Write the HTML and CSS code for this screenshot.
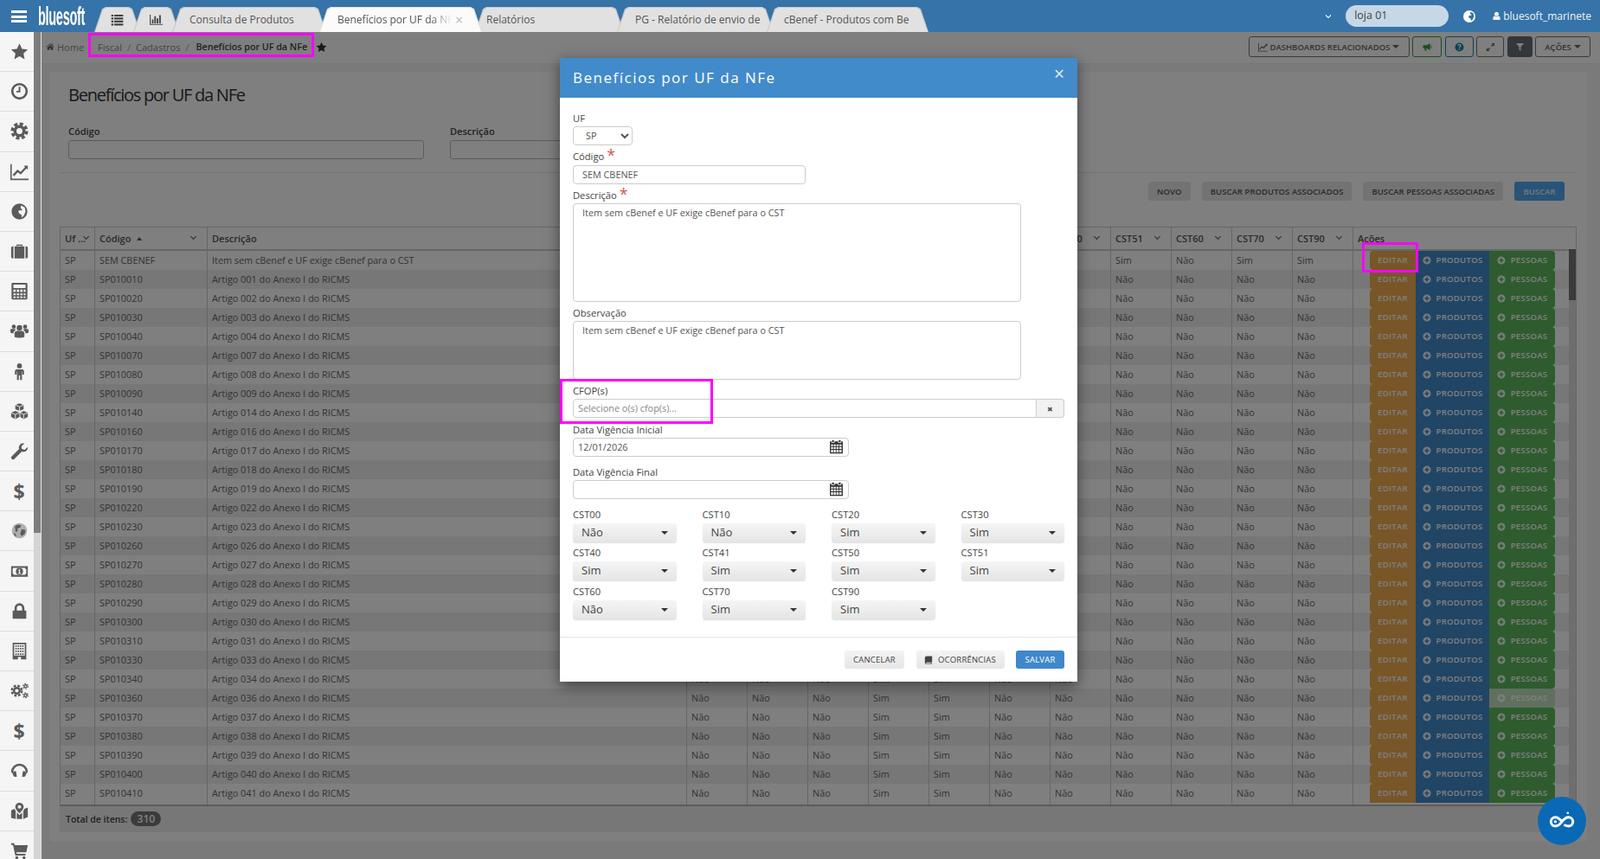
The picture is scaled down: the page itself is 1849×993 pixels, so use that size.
FILE: index.html
```html
<!DOCTYPE html>
<html lang="pt-BR">
<head>
    <meta charset="UTF-8">
    <title>Benefícios por UF da NFe</title>
    <link rel="stylesheet" href="styles.css">
</head>
<body>
    <svg class="sprite" xmlns="http://www.w3.org/2000/svg">
        <symbol id="i-star" viewBox="0 0 24 24"><path d="M12 1.500l3.300 7 7.700.9-5.700 5.200 1.500 7.600-6.800-3.800-6.800 3.800 1.500-7.600L1 9.400l7.700-.9z"/></symbol>
        <symbol id="i-clock" viewBox="0 0 24 24"><circle cx="12" cy="12" r="9.500" fill="none" stroke="currentColor" stroke-width="3"/><path d="M11 6h2.200v7.500H8v-2h3z"/></symbol>
        <symbol id="i-cog" viewBox="0 0 24 24"><circle cx="12" cy="12" r="6" fill="none" stroke="currentColor" stroke-width="4"/><circle cx="12" cy="12" r="9.500" fill="none" stroke="currentColor" stroke-width="4" stroke-dasharray="4.500 2.960"/></symbol>
        <symbol id="i-chart" viewBox="0 0 24 24"><path d="M0 2h1.800v19H24v2H0z"/><path d="M4 17l5.500-6 4 3L21 6" fill="none" stroke="currentColor" stroke-width="2.600"/><path d="M17.500 4H23v5.500z"/></symbol>
        <symbol id="i-globe" viewBox="0 0 24 24"><path fill-rule="evenodd" d="M12 1.500a10.500 10.500 0 1 0 0 21 10.500 10.500 0 0 0 0-21zM14 4l5 2.500 1 5.500-2 5-3 3-.5-4-3-1.500-1-3 2.500-1.500 2 1 .5-2-2-1.500z"/></symbol>
        <symbol id="i-briefcase" viewBox="0 0 24 24"><path d="M8 5V3h8v2h-1.500V4.500h-5V5z"/><path d="M1 7.500A2 2 0 0 1 3 5.500h1v16H3a2 2 0 0 1-2-2zM5.500 5.500h13v16h-13zM20 5.500h1a2 2 0 0 1 2 2v12a2 2 0 0 1-2 2h-1z"/></symbol>
        <symbol id="i-calc" viewBox="0 0 24 24"><path fill-rule="evenodd" d="M3 1h18a1.500 1.500 0 0 1 1.500 1.500v19A1.500 1.500 0 0 1 21 23H3a1.500 1.500 0 0 1-1.500-1.500v-19A1.500 1.500 0 0 1 3 1zM4 3.500V8h16V3.500zM4 10v3h3v-3zm4.500 0v3h3v-3zm4.500 0v3h3v-3zm4.500 0v3H20v-3zM4 15v2.500h3V15zm4.500 0v2.500h3V15zm4.500 0v2.500h3V15zm4.500 0v2.500H20V15zM4 19v2h3v-2zm4.500 0v2h3v-2zm4.500 0v2h3v-2zm4.500 0v2H20v-2z"/></symbol>
        <symbol id="i-users" viewBox="0 0 24 24"><circle cx="12" cy="8" r="3.700"/><circle cx="4.500" cy="6.500" r="2.700"/><circle cx="19.500" cy="6.500" r="2.700"/><path d="M5.500 20v-4.500c0-2 1.500-3.500 3.500-3.500h6c2 0 3.500 1.500 3.500 3.500V20c-3 1.500-10 1.500-13 0zM0 11c0-1 1-1.500 2-1.500h4.500c-.5.800 0 1.300.3 1.800-1.800.6-2.800 2-2.800 4-2 0-4-.5-4-1.500zM24 11c0-1-1-1.500-2-1.500h-4.500c.5.800 0 1.300-.3 1.800 1.800.6 2.800 2 2.800 4 2 0 4-.5 4-1.500z"/></symbol>
        <symbol id="i-male" viewBox="0 0 24 24"><circle cx="12" cy="4.500" r="3.300"/><path d="M8.500 9h7A2.500 2.500 0 0 1 18 11.500V16h-2.200v-4h-.5v11h-2.500v-6h-1.600v6H8.700V12h-.5v4H6v-4.500A2.500 2.500 0 0 1 8.500 9z"/></symbol>
        <symbol id="i-cubes" viewBox="0 0 24 24"><path d="M12 1.500l5.500 2.200v5.500L12 11.500 6.500 9.200V3.700zM6.500 11.500L12 13.800v5.700l-5.500 2.800L1 19.500v-5.700zM17.500 11.500l5.500 2.300v5.700l-5.500 2.800-4.400-2.800v-5.700z"/><path d="M6.500 3.700L12 6l5.500-2.300M12 6v5.500M1 13.800l5.500 2.400 5.500-2.400M6.500 16.200v6M13 13.800l4.500 2.400 5.500-2.400M17.500 16.200v6" fill="none" stroke="#f5f5f5" stroke-width="1"/></symbol>
        <symbol id="i-wrench" viewBox="0 0 24 24"><path d="M23 6.500l-4.200 3.700-3.500-1-.8-3.500L18.500 2c-3.500-1.200-7 1-7.300 4.800 0 1 .1 1.700.4 2.400L1.500 19a2.500 2.500 0 0 0 3.500 3.500l10-10c3.800 1.300 8.500-1.400 8-6z"/></symbol>
        <symbol id="i-earth" viewBox="0 0 24 24"><circle cx="12" cy="12" r="10" opacity=".45"/><path d="M6 6c3-2 6-2 8-1l-1 3-4 1 1 3-3 2zM15 10l5 1-1 5-4 3-2-3zM4 15l3 1 1 4c-2-1-3-3-4-5z"/></symbol>
        <symbol id="i-money" viewBox="0 0 24 24"><path fill-rule="evenodd" d="M1 5h22v14H1zM3.500 7.500c0 1-.5 1.500-.5 1.500v6c1 0 1.500.5 1.500 1.500h15c0-1 .5-1.500 1.500-1.500V9c-1 0-1.500-.5-1.500-1.500z"/><circle cx="12" cy="12" r="4.700"/><path d="M11.300 9.500h1.400v4.500h1v1h-3.400v-1h1v-3h-1z" fill="#f5f5f5"/></symbol>
        <symbol id="i-lock" viewBox="0 0 24 24"><path fill-rule="evenodd" d="M5.500 11V8a6.500 6.500 0 0 1 13 0v3H20a1 1 0 0 1 1 1v9a1 1 0 0 1-1 1H4a1 1 0 0 1-1-1v-9a1 1 0 0 1 1-1zm3 0h7V8a3.500 3.500 0 0 0-7 0z"/></symbol>
        <symbol id="i-building" viewBox="0 0 24 24"><path fill-rule="evenodd" d="M3 1h18v22h-7v-3h-4v3H3zM5 3v15h14V3z"/><path d="M6.500 4.500h2v2h-2zM9.500 4.500h2v2h-2zM12.500 4.500h2v2h-2zM15.500 4.500h2v2h-2zM6.500 8h2v2h-2zM9.500 8h2v2h-2zM12.500 8h2v2h-2zM15.500 8h2v2h-2zM6.500 11.500h2v2h-2zM9.500 11.500h2v2h-2zM12.500 11.500h2v2h-2zM15.500 11.500h2v2h-2zM6.500 15h2v2h-2zM9.500 15h2v2h-2zM12.500 15h2v2h-2zM15.500 15h2v2h-2z"/></symbol>
        <symbol id="i-cogs" viewBox="0 0 24 24"><g fill="none" stroke="currentColor"><circle cx="8.500" cy="12" r="3.800" stroke-width="2.800"/><circle cx="8.500" cy="12" r="6.600" stroke-width="2.800" stroke-dasharray="3.200 2"/><circle cx="20" cy="6" r="1.800" stroke-width="1.600"/><circle cx="20" cy="6" r="3.300" stroke-width="1.400" stroke-dasharray="1.800 1.650"/><circle cx="20" cy="18" r="1.800" stroke-width="1.600"/><circle cx="20" cy="18" r="3.300" stroke-width="1.400" stroke-dasharray="1.800 1.650"/></g></symbol>
        <symbol id="i-headset" viewBox="0 0 24 24"><path d="M1 14a11 11 0 0 1 22 0l-2.500 3-.5-3a8 8 0 0 0-16 0l-.5 3z"/><path d="M5 13h2.500l1 7.500H6.500C4 20.500 3 18 3.500 15zM19 13h-2.500l-1 7.500h2c2.500 0 3.500-2.500 3-5.500z"/></symbol>
        <symbol id="i-map" viewBox="0 0 24 24"><path fill-rule="evenodd" d="M12 1a5.500 5.500 0 0 1 5.500 5.500C17.500 10 12 15 12 15S6.500 10 6.500 6.500A5.500 5.500 0 0 1 12 1zm0 3.200a2.300 2.300 0 1 0 0 4.600 2.300 2.300 0 0 0 0-4.600z"/><path d="M1 11l4.500-2 1.500 3v10.500L1 21zM8.500 14l3.500 3.500 3.500-3.500v8.500l-7 0zM17 12l1.500-3L23 7.500V20l-6 2.500z"/></symbol>
        <symbol id="i-cart" viewBox="0 0 24 24"><path d="M1 2h4l.7 2.500H23l-2 9.500H8l.4 2H20v2.200H6.500L3.500 4.200H1z"/><circle cx="8.500" cy="21" r="2"/><circle cx="18" cy="21" r="2"/></symbol>
        <symbol id="i-home" viewBox="0 0 24 24"><path d="M12 3L1 12.500l1.200 1.300L12 5.500l9.800 8.300 1.200-1.300-4-3.400V4h-3v2.500z"/><path d="M4 14.500L12 7.500l8 7V21h-6v-5h-4v5H4z"/></symbol>
        <symbol id="i-list" viewBox="0 0 24 24"><path d="M1 3h4v3.500H1zM6.500 3H23v3.500H6.500zM1 8.500h4V12H1zM6.500 8.500H23V12H6.500zM1 14h4v3.500H1zM6.500 14H23v3.500H6.500zM1 19.500h4V23H1zM6.500 19.500H23V23H6.500z"/></symbol>
        <symbol id="i-bars" viewBox="0 0 24 24"><path d="M0 3h1.800v17.500H24V22H0zM4 12h3v7H4zM8.500 6h3v13h-3zM13 10h3v9h-3zM17.500 4h3v15h-3z"/></symbol>
        <symbol id="i-user" viewBox="0 0 24 24"><circle cx="12" cy="7" r="5.500"/><path d="M3 22v-5c0-3 2-5 4.500-5 1 1 2.800 1.600 4.500 1.600s3.500-.6 4.500-1.600c2.500 0 4.500 2 4.500 5v5z"/></symbol>
        <symbol id="i-bullhorn" viewBox="0 0 24 24"><path d="M19 3v16h-1.500L11 15H9l1 6.500H6L5 15H3.500A2.500 2.500 0 0 1 1 12.500v-3A2.500 2.500 0 0 1 3.500 7H11l6.500-4zM21 8.500l2-1.500v8l-2-1.500z"/></symbol>
        <symbol id="i-help" viewBox="0 0 24 24"><path fill-rule="evenodd" d="M12 1a11 11 0 1 0 0 22 11 11 0 0 0 0-22zm-1.500 15h3v3h-3zm-3-9c1-2 3-2.500 4.700-2.500 2.800 0 4.800 1.500 4.800 3.800 0 3-3.500 3-3.500 5.700h-3c0-3.500 3.200-3.800 3.200-5.400 0-.8-.7-1.300-1.700-1.300-1.200 0-1.900.7-2.500 1.500z"/></symbol>
        <symbol id="i-expand" viewBox="0 0 24 24"><path d="M14 2h8v8l-3-3-4 4-2-2 4-4zM10 22H2v-8l3 3 4-4 2 2-4 4z"/></symbol>
        <symbol id="i-filter" viewBox="0 0 24 24"><path d="M2 2h20l-8 9.500V22l-4-3v-7.500z"/></symbol>
        <symbol id="i-plus" viewBox="0 0 24 24"><path fill-rule="evenodd" d="M12 1a11 11 0 1 0 0 22 11 11 0 0 0 0-22zm-2 5h4v4h4v4h-4v4h-4v-4H6v-4h4z"/></symbol>
        <symbol id="i-book" viewBox="0 0 24 24"><path d="M7 1h15v16l-1.500 1.500V21H22v2H6a4 4 0 0 1-4-4V6a5 5 0 0 1 5-5zM6 18.500a1.500 1.500 0 0 0 0 2.500h12.500v-2.500z"/></symbol>
        <symbol id="i-calendar" viewBox="0 0 24 24"><path fill-rule="evenodd" d="M5 1h3v3.500H5zM16 1h3v3.500h-3zM1.500 3H4v2.500h5V3h6v2.500h5V3h2.500v20h-21zM3.500 8v3h3V8zm4.300 0v3h3.200V8zm4.500 0v3h3.300V8zm4.600 0v3h3.600V8zM3.500 12.200v3.300h3v-3.300zm4.300 0v3.300h3.200v-3.300zm4.500 0v3.300h3.300v-3.300zm4.600 0v3.300h3.600v-3.300zM3.500 16.800V21h3v-4.200zm4.300 0V21h3.200v-4.200zm4.500 0V21h3.300v-4.200zm4.600 0V21h3.600v-4.200z"/></symbol>
    </svg>

    <header class="topbar">
        <button class="burger"><span></span><span></span><span></span></button>
        <div class="logo"><span>bluesoft</span></div>
        <nav class="tabs">
            <a class="tab tab-icon"><svg class="ic"><use href="#i-list"/></svg></a>
            <a class="tab tab-icon"><svg class="ic"><use href="#i-bars"/></svg></a>
            <a class="tab"><span class="tab-label">Consulta de Produtos</span></a>
            <a class="tab active"><span class="tab-label">Benefícios por UF da NFe</span><span class="tab-close">&times;</span></a>
            <a class="tab"><span class="tab-label">Relatórios</span></a>
            <a class="tab"><span class="tab-label">PG - Relatório de envio de arquivos</span></a>
            <a class="tab"><span class="tab-label">cBenef - Produtos com Benefício</span></a>
        </nav>
        <div class="top-right">
            <span class="double-chevron"></span>
            <div class="store">loja 01</div>
            <svg class="ic top-globe"><use href="#i-globe"/></svg>
            <div class="user"><svg class="ic"><use href="#i-user"/></svg>bluesoft_marinete</div>
        </div>
    </header>

    <div class="shell">
        <aside class="sidebar">
            <a class="side-item"><svg class="ic"><use href="#i-star"/></svg></a>
            <a class="side-item"><svg class="ic"><use href="#i-clock"/></svg></a>
            <a class="side-item"><svg class="ic"><use href="#i-cog"/></svg></a>
            <a class="side-item"><svg class="ic"><use href="#i-chart"/></svg></a>
            <a class="side-item"><svg class="ic"><use href="#i-globe"/></svg></a>
            <a class="side-item"><svg class="ic"><use href="#i-briefcase"/></svg></a>
            <a class="side-item"><svg class="ic"><use href="#i-calc"/></svg></a>
            <a class="side-item"><svg class="ic"><use href="#i-users"/></svg></a>
            <a class="side-item"><svg class="ic"><use href="#i-male"/></svg></a>
            <a class="side-item"><svg class="ic"><use href="#i-cubes"/></svg></a>
            <a class="side-item"><svg class="ic"><use href="#i-wrench"/></svg></a>
            <a class="side-item side-dollar">$</a>
            <a class="side-item"><svg class="ic"><use href="#i-earth"/></svg></a>
            <a class="side-item"><svg class="ic"><use href="#i-money"/></svg></a>
            <a class="side-item"><svg class="ic"><use href="#i-lock"/></svg></a>
            <a class="side-item"><svg class="ic"><use href="#i-building"/></svg></a>
            <a class="side-item"><svg class="ic"><use href="#i-cogs"/></svg></a>
            <a class="side-item side-dollar">$</a>
            <a class="side-item"><svg class="ic"><use href="#i-headset"/></svg></a>
            <a class="side-item"><svg class="ic"><use href="#i-map"/></svg></a>
            <a class="side-item"><svg class="ic"><use href="#i-cart"/></svg></a>
        </aside>
        <div class="side-scroll"><div class="side-thumb"></div></div>

        <main class="main">
            <div class="crumbbar">
                <svg class="ic crumb-home"><use href="#i-home"/></svg>
                <a class="crumb crumb-first">Home</a>
                <a class="crumb crumb-fiscal">Fiscal</a>
                <span class="crumb-sep">/</span>
                <a class="crumb">Cadastros</a>
                <span class="crumb-sep">/</span>
                <strong class="crumb-current">Benefícios por UF da NFe</strong>
                <svg class="ic crumb-star"><use href="#i-star"/></svg>
                <div class="toolbar">
                    <button class="tool tool-dash"><svg class="ic"><use href="#i-chart"/></svg>Dashboards relacionados<i class="caret"></i></button>
                    <button class="tool tool-green"><svg class="ic"><use href="#i-bullhorn"/></svg></button>
                    <button class="tool tool-info"><svg class="ic"><use href="#i-help"/></svg></button>
                    <button class="tool tool-expand"><svg class="ic"><use href="#i-expand"/></svg></button>
                    <button class="tool tool-filter"><svg class="ic"><use href="#i-filter"/></svg></button>
                    <button class="tool tool-acoes">Ações<i class="caret"></i></button>
                </div>
            </div>

            <section class="panel">
                <h1 class="page-title">Benefícios por UF da NFe</h1>
                <div class="filters">
                    <div class="filter filter-code">
                        <label>Código</label>
                        <input type="text">
                    </div>
                    <div class="filter filter-desc">
                        <label>Descrição</label>
                        <input type="text">
                    </div>
                </div>
                <div class="actions">
                    <button class="btn btn-new">Novo</button>
                    <button class="btn">Buscar produtos associados</button>
                    <button class="btn">Buscar pessoas associadas</button>
                    <button class="btn btn-search">Buscar</button>
                </div>

                <div class="grid">
                    <table class="grid-table">
                        <colgroup>
                            <col class="col-uf"><col class="col-code"><col class="col-desc">
                            <col class="col-cst"><col class="col-cst"><col class="col-cst"><col class="col-cst">
                            <col class="col-cst"><col class="col-cst"><col class="col-cst"><col class="col-cst">
                            <col class="col-cst"><col class="col-cst"><col class="col-cst">
                            <col>
                        </colgroup>
                        <thead>
                            <tr>
                                <th class="has-menu">Uf ...</th>
                                <th class="has-menu">Código <i class="sort-up"></i></th>
                                <th>Descrição</th>
                                <th class="has-menu">CST00</th>
                                <th class="has-menu">CST10</th>
                                <th class="has-menu">CST20</th>
                                <th class="has-menu">CST30</th>
                                <th class="has-menu">CST40</th>
                                <th class="has-menu">CST41</th>
                                <th class="has-menu">CST50</th>
                                <th class="has-menu">CST51</th>
                                <th class="has-menu">CST60</th>
                                <th class="has-menu">CST70</th>
                                <th class="has-menu">CST90</th>
                                <th>Ações</th>
                            </tr>
                        </thead>
                        <tbody id="rows"></tbody>
                    </table>
                    <div class="grid-scroll"><div class="grid-thumb"></div></div>
                    <div class="grid-foot"><b>Total de itens:</b> <span class="badge">310</span></div>
                </div>
            </section>

            <div class="backdrop"></div>

            <div class="modal">
                <div class="modal-head">
                    <h2>Benefícios por UF da NFe</h2>
                    <span class="modal-close">&times;</span>
                </div>
                <form class="modal-body">
                    <div class="field">
                        <label>UF</label>
                        <select class="ctl uf-select"><option>SP</option></select>
                    </div>
                    <div class="field field-code">
                        <label>Código <em class="req">*</em></label>
                        <input class="ctl code-input" type="text" value="SEM CBENEF">
                    </div>
                    <div class="field">
                        <label>Descrição <em class="req">*</em></label>
                        <textarea class="ctl area area-desc">Item sem cBenef e UF exige cBenef para o CST</textarea>
                    </div>
                    <div class="field">
                        <label>Observação</label>
                        <textarea class="ctl area area-obs">Item sem cBenef e UF exige cBenef para o CST</textarea>
                    </div>
                    <div class="field">
                        <label>CFOP(s)</label>
                        <div class="input-group">
                            <input class="ctl cfop-input" type="text" placeholder="Selecione o(s) cfop(s)...">
                            <span class="addon">&#10006;</span>
                        </div>
                    </div>
                    <div class="field field-date">
                        <label>Data Vigência Inicial</label>
                        <div class="date-wrap">
                            <input class="ctl date-input" type="text" value="12/01/2026">
                            <svg class="ic date-icon"><use href="#i-calendar"/></svg>
                        </div>
                    </div>
                    <div class="field field-date">
                        <label>Data Vigência Final</label>
                        <div class="date-wrap">
                            <input class="ctl date-input" type="text">
                            <svg class="ic date-icon"><use href="#i-calendar"/></svg>
                        </div>
                    </div>
                    <div class="cst-grid">
                        <div><label>CST00</label><button type="button" class="pick">Não</button></div>
                        <div><label>CST10</label><button type="button" class="pick">Não</button></div>
                        <div><label>CST20</label><button type="button" class="pick">Sim</button></div>
                        <div><label>CST30</label><button type="button" class="pick">Sim</button></div>
                        <div><label>CST40</label><button type="button" class="pick">Sim</button></div>
                        <div><label>CST41</label><button type="button" class="pick">Sim</button></div>
                        <div><label>CST50</label><button type="button" class="pick">Sim</button></div>
                        <div><label>CST51</label><button type="button" class="pick">Sim</button></div>
                        <div class="cst-last"><label>CST60</label><button type="button" class="pick">Não</button></div>
                        <div class="cst-last"><label>CST70</label><button type="button" class="pick">Sim</button></div>
                        <div class="cst-last"><label>CST90</label><button type="button" class="pick">Sim</button></div>
                    </div>
                </form>
                <div class="modal-foot">
                    <button class="mbtn mbtn-cancel">Cancelar</button>
                    <button class="mbtn mbtn-occ"><svg class="ic"><use href="#i-book"/></svg>Ocorrências</button>
                    <button class="mbtn mbtn-save">Salvar</button>
                </div>
            </div>
        </main>
    </div>

    <div class="mark mark-crumb"></div>
    <div class="mark mark-edit"></div>
    <div class="mark mark-cfop"></div>

    <button class="fab">
        <svg viewBox="0 0 40 40" width="34" height="34" fill="none" stroke="#fff" stroke-width="3.500">
            <path d="M20 21c-3-4-5-6-9-6a6 6 0 0 0 0 12c4 0 6-2 9-6s5-6 9-6a6 6 0 0 1 0 12c-3 0-5-1-6-2"/>
            <circle cx="11" cy="21" r="2" fill="#fff" stroke="none"/>
            <circle cx="28" cy="9" r="1.500" fill="#fff" stroke="none"/>
        </svg>
    </button>

    <script src="app.js"></script>
</body>
</html>
```

FILE: styles.css
```css
* {
    margin: 0;
    padding: 0;
    box-sizing: border-box;
}
body {
    font-family: "Open Sans", "Liberation Sans", sans-serif;
    font-size: 11px;
    color: #555;
    height: 100vh;
    overflow: hidden;
    background: #f4f4f4;
}
.sprite {
    display: none;
}
.ic {
    width: 1em;
    height: 1em;
    fill: currentColor;
    flex: none;
}
button {
    font-family: inherit;
    border: none;
    cursor: pointer;
}

/* top bar */
.topbar {
    height: 37px;
    background: #3673a8;
    display: flex;
    align-items: flex-end;
    position: relative;
    z-index: 5;
}
.burger {
    width: 18px;
    height: 14px;
    margin: 0 0 11px 13px;
    background: none;
    display: flex;
    flex-direction: column;
    justify-content: space-between;
}
.burger span {
    display: block;
    height: 3px;
    background: #fff;
}
.logo {
    width: 54px;
    margin: 0 11px 3px 13px;
    height: 30px;
    color: #fff;
}
.logo span {
    display: inline-block;
    font-family: "Liberation Sans", sans-serif;
    font-weight: bold;
    font-size: 30px;
    line-height: 30px;
    letter-spacing: -.5px;
    transform: scaleX(.48);
    transform-origin: left center;
}
.tabs {
    display: flex;
    height: 29px;
}
.tab {
    position: relative;
    height: 29px;
    margin-left: -8px;
    padding-left: 20px;
    display: flex;
    align-items: center;
    font-size: 12px;
    color: #555;
    background: #c9c9c9;
    clip-path: polygon(0 100%, 9px 8%, 13px 0, calc(100% - 13px) 0, calc(100% - 9px) 8%, 100% 100%);
}
.tab::before {
    content: "";
    position: absolute;
    inset: 1px 1px 0 1px;
    background: #e1e1e1;
    clip-path: polygon(0 100%, 9px 8%, 13px 0, calc(100% - 13px) 0, calc(100% - 9px) 8%, 100% 100%);
}
.tab > * {
    position: relative;
}
.tab:first-child {
    margin-left: 0;
}
.tab-icon {
    width: 53px;
    padding: 0;
    justify-content: center;
    color: #444;
    font-size: 15px;
}
.tab:nth-child(3) { width: 178px; }
.tab:nth-child(4) { width: 188px; z-index: 2; padding-left: 21px; }
.tab:nth-child(5) { width: 172px; padding-left: 13px; }
.tab:nth-child(6) { width: 181px; padding-left: 21px; }
.tab:nth-child(7) { width: 187px; }
.tab-label {
    white-space: nowrap;
    overflow: hidden;
}
.tab:nth-child(6) .tab-label { width: 144px; }
.tab:nth-child(7) .tab-label { width: 145px; }
.tab.active {
    background: #e4e4e4;
}
.tab.active::before {
    background: #fbfbfb;
}
.active .tab-label {
    width: 132px;
    -webkit-mask-image: linear-gradient(to right, #000 82%, transparent 100%);
    mask-image: linear-gradient(to right, #000 82%, transparent 100%);
}
.tab-close {
    margin-left: 4px;
    font-size: 16px;
    color: #bbb;
}
.top-right {
    margin-left: auto;
    height: 37px;
    padding-right: 10px;
    display: flex;
    align-items: center;
    color: #fff;
}
.double-chevron {
    width: 6px;
    height: 8px;
    margin: 0 17px 0 0;
    background: linear-gradient(45deg, transparent 40%, #d5e2ee 40%, #d5e2ee 60%, transparent 60%) left / 50% 100% no-repeat,
                linear-gradient(-45deg, transparent 40%, #d5e2ee 40%, #d5e2ee 60%, transparent 60%) right / 50% 100% no-repeat;
}
.store {
    width: 119px;
    height: 25px;
    margin-top: -1px;
    padding-left: 10px;
    border-radius: 13px;
    background: #c6d7e6;
    color: #444;
    font-size: 12.500px;
    line-height: 24px;
}
.top-globe {
    font-size: 16px;
    margin-left: 16px;
}
.user {
    margin-left: 20px;
    display: flex;
    align-items: center;
    gap: 2px;
    font-size: 12px;
    color: #eef3f8;
}
.user .ic {
    font-size: 11px;
    margin-left: -2px;
}

/* page frame */
.shell {
    display: flex;
    height: calc(100vh - 37px);
}
.sidebar {
    width: 39px;
    flex: none;
    background: #f5f5f5;
    overflow: hidden;
    position: relative;
    z-index: 5;
}
.side-item {
    height: 46.2px;
    padding-left: 5px;
    border-bottom: 1px solid #dcdcdc;
    display: flex;
    align-items: center;
    justify-content: center;
    font-size: 21px;
    color: #5b5b5b;
}
.side-dollar {
    font-weight: 700;
    font-size: 23px;
}
.side-scroll {
    width: 9px;
    flex: none;
    background: #d4d4d4;
    border-right: 1px solid #e2e2e2;
    position: relative;
    z-index: 5;
}
.side-thumb {
    height: 579px;
    background: #7e7e7e;
}
.main {
    flex: 1;
    position: relative;
    overflow: hidden;
}
.backdrop {
    position: absolute;
    inset: 0;
    background: rgba(0, 0, 0, .5);
}

/* breadcrumb */
.crumbbar {
    height: 37px;
    background: #fff;
    border-bottom: 1px solid #eee;
    padding: 5px 11px 7px 5px;
    display: flex;
    align-items: center;
    font-size: 11px;
    color: #888;
}
.crumb-home {
    font-size: 10px;
    color: #666;
    margin-right: 3px;
}
.crumb-fiscal {
    margin-left: 16px;
}
.crumb-sep {
    margin: 0 6px;
    color: #aaa;
}
.crumb-current {
    font-size: 10.700px;
    font-weight: 600;
    color: #444;
    margin-left: 2px;
}
.crumb-star {
    font-size: 13px;
    color: #333;
    margin-left: 10px;
}
.toolbar {
    margin-left: auto;
    display: flex;
    gap: 3.500px;
    height: 24px;
}
.tool {
    height: 24px;
    background: #fff;
    border: 1px solid #777;
    border-radius: 3px;
    font-size: 9.500px;
    font-weight: 600;
    text-transform: uppercase;
    color: #666;
    display: flex;
    align-items: center;
    justify-content: center;
    gap: 3px;
    white-space: nowrap;
}
.tool .ic {
    font-size: 11px;
}
.tool-dash { width: 186px; }
.tool-green { width: 34px; color: #3c9a3c; border-color: #3c9a3c; }
.tool-info { width: 33px; color: #1d86ab; border-color: #1d86ab; }
.tool-expand { width: 32px; }
.tool-filter { width: 29px; background: #666e78; border-color: #666e78; color: #fff; }
.tool-acoes { width: 64px; }
.caret {
    display: inline-block;
    border: 4px solid transparent;
    border-top-color: currentColor;
    border-bottom: none;
}

/* filter panel */
.panel {
    margin: 9px 15px 0 9px;
    height: 890px;
    padding: 15px 12px 11px;
    background: #fff;
    border-radius: 4px;
}
.page-title {
    height: 24px;
    margin: 0 0 22px 10px;
    font-size: 20px;
    line-height: 24px;
    font-weight: 400;
    letter-spacing: -1.250px;
    color: #333;
}
.filters {
    display: flex;
    gap: 30px;
    padding-left: 10px;
    padding-bottom: 15px;
    border-bottom: 1px solid #e6e6e6;
}
.filter label {
    display: block;
    height: 16px;
    margin-bottom: 2px;
    font-size: 11px;
    line-height: 16px;
    font-weight: 600;
    color: #444;
}
.filter input {
    display: block;
    height: 22px;
    border: 1px solid #bbb;
    border-radius: 3px;
    background: #fff;
}
.filter-code input { width: 411px; }
.filter-desc input { width: 410px; }
.actions {
    display: flex;
    justify-content: flex-end;
    gap: 13px;
    margin: 10px 14px 30px 0;
}
.btn {
    height: 22px;
    padding: 0 10px;
    border-radius: 3px;
    background: #e7e7e7;
    color: #555;
    font-size: 9.500px;
    font-weight: 600;
    letter-spacing: .05px;
    text-transform: uppercase;
}
.btn-new {
    width: 49px;
    padding: 0;
}
.btn-search {
    width: 58px;
    padding: 0;
    background: #4fa8f0;
    color: #eee;
}

/* grid */
.grid {
    position: relative;
}
.grid-table {
    width: 100%;
    table-layout: fixed;
    border-collapse: collapse;
    border: 1px solid #ccc;
    border-bottom: 2px solid #bbb;
}
.col-uf { width: 40px; }
.col-code { width: 130px; }
.col-desc { width: 554px; }
.col-cst { width: 70px; }
.grid-table th {
    height: 26px;
    padding: 0 5px;
    background: #fff;
    border-left: 1px solid #ccc;
    border-bottom: 2px solid #ccc;
    text-align: left;
    font-size: 11px;
    font-weight: 600;
    color: #555;
    white-space: nowrap;
    position: relative;
}
.has-menu::after {
    content: "";
    position: absolute;
    right: 13px;
    top: 8px;
    width: 4px;
    height: 4px;
    border-right: 1px solid #555;
    border-bottom: 1px solid #555;
    transform: rotate(45deg);
}
th:first-child.has-menu::after {
    right: 7px;
}
.sort-up {
    display: inline-block;
    margin: 0 0 2px 4px;
    border: 3px solid transparent;
    border-bottom: 4px solid #555;
    border-top: none;
}
.grid-table td {
    height: 22px;
    padding: 0 5px;
    border-left: 1px solid #ccc;
    font-size: 10.850px;
    color: #666;
    white-space: nowrap;
    overflow: hidden;
}
.grid-table tr:nth-child(even) td {
    background: #eee;
}
.grid-table tbody tr:last-child td {
    height: 25px;
    vertical-align: top;
    padding-top: 3px;
}
.cell-actions {
    padding: 0 0 0 19px !important;
}
.row-btns {
    display: flex;
    height: 22px;
}
.row-btn {
    height: 22px;
    color: #fff;
    font-size: 9.500px;
    font-weight: 600;
    letter-spacing: .3px;
    text-transform: uppercase;
    display: flex;
    align-items: center;
    justify-content: center;
    gap: 6px;
}
.row-btn .ic {
    font-size: 10px;
    opacity: .9;
}
.row-edit { width: 53px; background: #f0ad4e; border-radius: 4px 0 0 4px; }
.row-prod { width: 85px; background: #428bca; }
.row-pess { width: 76px; background: #5cb85c; border-radius: 0 4px 4px 0; }
.row-pess.hovered { background: #bfe0bf; }
.grid-table tbody tr:last-child .row-edit { border-radius: 4px 0 0 0; }
.grid-scroll {
    position: absolute;
    right: 1px;
    top: 26px;
    width: 8px;
    height: 643px;
    background: #ddd;
}
.grid-thumb {
    height: 59px;
    background: #777;
}
.grid-foot {
    height: 30px;
    padding-left: 7px;
    display: flex;
    align-items: center;
    gap: 4px;
    background: #eee;
    font-size: 10.500px;
    color: #444;
}
.grid-foot b {
    font-weight: 600;
}
.badge {
    width: 35px;
    height: 17px;
    border-radius: 9px;
    background: #777;
    color: #fff;
    font-size: 12px;
    font-weight: 600;
    line-height: 17px;
    text-align: center;
}

/* modal */
.modal {
    position: absolute;
    left: 599px;
    top: 30px;
    width: 598px;
    background: #fff;
    box-shadow: 0 5px 15px rgba(0, 0, 0, .5);
    color: #444;
}
.modal-head {
    height: 46px;
    padding: 0 15px;
    background: #428bca;
    display: flex;
    align-items: center;
    justify-content: space-between;
    color: #fff;
}
.modal-head h2 {
    font-size: 17px;
    font-weight: 400;
    letter-spacing: 1.500px;
    margin-top: -1px;
}
.modal-close {
    font-size: 21px;
    line-height: 1;
    margin: -9px 0 0 0;
    color: #e3edf6;
}
.modal-body {
    padding: 16px 15px 20px;
}
.field {
    margin-bottom: 5px;
}
.field label,
.cst-grid label {
    display: block;
    height: 16px;
    line-height: 16px;
    margin-bottom: 1px;
    font-size: 11.200px;
    color: #444;
}
.field-code label {
    margin-bottom: 2px;
}
.req {
    font-style: normal;
    font-size: 18px;
    line-height: 10px;
    color: #d9534f;
    vertical-align: -1px;
}
.ctl {
    display: block;
    height: 22px;
    border: 1px solid #ccc;
    border-radius: 4px;
    background: #fff;
    color: #555;
    font-family: inherit;
    font-size: 10.850px;
    padding: 0 10px 2px;
}
.uf-select {
    width: 69px;
}
.code-input {
    width: 269px;
}
.area {
    width: 518px;
    resize: none;
    padding-top: 2px;
    line-height: 16px;
}
.area-desc {
    height: 114px;
}
.area-obs {
    height: 68px;
}
.input-group {
    display: flex;
    width: 568px;
}
.cfop-input {
    flex: 1;
    padding: 0 5px 2px;
    border-radius: 4px 0 0 4px;
}
.cfop-input::placeholder {
    color: #888;
}
.addon {
    width: 32px;
    height: 22px;
    border: 1px solid #ccc;
    border-left: none;
    border-radius: 0 4px 4px 0;
    background: #f2f2f2;
    color: #555;
    text-align: center;
    font-size: 8px;
    line-height: 22px;
}
.field-date {
    padding-top: 1px;
    margin-bottom: 9px;
}
.date-wrap {
    position: relative;
    width: 319px;
}
.date-input {
    width: 100%;
    padding: 0 5px 2px;
}
.date-icon {
    position: absolute;
    right: 6px;
    top: 2px;
    font-size: 17px;
    color: #333;
}
.cst-grid {
    display: grid;
    grid-template-columns: repeat(4, 119.500px);
    column-gap: 30px;
    row-gap: 4px;
    margin-top: 10px;
}
.cst-grid label {
    margin-bottom: 2px;
}
.cst-last {
    margin-top: 1px;
}
.pick {
    display: block;
    position: relative;
    width: 100%;
    height: 22px;
    padding: 0 0 2px 10px;
    border-radius: 3px;
    background: linear-gradient(#f5f5f5, #e5e5e5);
    box-shadow: 0 1px 1px rgba(0, 0, 0, .12);
    color: #444;
    font-size: 13px;
    text-align: left;
}
.pick::after {
    content: "";
    position: absolute;
    right: 10px;
    top: 9px;
    border: 4px solid transparent;
    border-top-color: #333;
    border-bottom: none;
}
.modal-foot {
    padding: 15px;
    border-top: 1px solid #e5e5e5;
    display: flex;
    justify-content: flex-end;
    gap: 13.500px;
}
.mbtn {
    height: 21px;
    border-radius: 3px;
    background: linear-gradient(#f3f3f3, #e6e6e6);
    color: #444;
    font-size: 9.500px;
    letter-spacing: .2px;
    text-transform: uppercase;
    display: flex;
    align-items: center;
    justify-content: center;
    gap: 6px;
}
.mbtn .ic {
    font-size: 10px;
}
.mbtn-cancel { width: 69px; }
.mbtn-occ { width: 102px; }
.mbtn-save {
    background: #3f88c9;
    color: #fff;
    width: 56px;
}

/* review marks drawn over the page */
.mark {
    position: absolute;
    border: 3px solid #f0f;
    z-index: 8;
}
.mark-crumb {
    left: 102px;
    top: 38px;
    width: 261px;
    height: 28px;
}
.mark-edit {
    left: 1574px;
    top: 280px;
    width: 65px;
    height: 35px;
}
.mark-cfop {
    left: 647px;
    top: 438px;
    width: 177px;
    height: 52px;
}
.fab {
    position: absolute;
    left: 1777px;
    top: 921px;
    width: 56px;
    height: 56px;
    border-radius: 50%;
    background: #0a69b5;
    display: flex;
    align-items: center;
    justify-content: center;
    z-index: 9;
}
```

FILE: app.js
```js
const codes = ['010', '020', '030', '040', '070', '080', '090', '140', '160', '170', '180', '190', '220', '230',
    '260', '270', '280', '290', '300', '310', '330', '340', '360', '370', '380', '390', '400', '410'];

const plus = '<svg class="ic"><use href="#i-plus"/></svg>';

function rowHtml(code, desc, values, hovered) {
    const cells = values.map(v => `<td>${v}</td>`).join('');
    return `<tr><td>SP</td><td>${code}</td><td>${desc}</td>${cells}<td class="cell-actions"><div class="row-btns">` +
        `<a class="row-btn row-edit">Editar</a>` +
        `<a class="row-btn row-prod">${plus}Produtos</a>` +
        `<a class="row-btn row-pess${hovered ? ' hovered' : ''}">${plus}Pessoas</a>` +
        `</div></td></tr>`;
}

const firstRow = ['Não', 'Não', 'Sim', 'Sim', 'Sim', 'Sim', 'Sim', 'Sim', 'Não', 'Sim', 'Sim'];
const otherRows = ['Não', 'Não', 'Não', 'Sim', 'Sim', 'Não', 'Não', 'Não', 'Não', 'Não', 'Não'];

let html = rowHtml('SEM CBENEF', 'Item sem cBenef e UF exige cBenef para o CST', firstRow, false);
codes.forEach(c => {
    html += rowHtml('SP010' + c, `Artigo 0${c.slice(0, 2)} do Anexo I do RICMS`, otherRows, c === '360');
});
document.getElementById('rows').innerHTML = html;
```
